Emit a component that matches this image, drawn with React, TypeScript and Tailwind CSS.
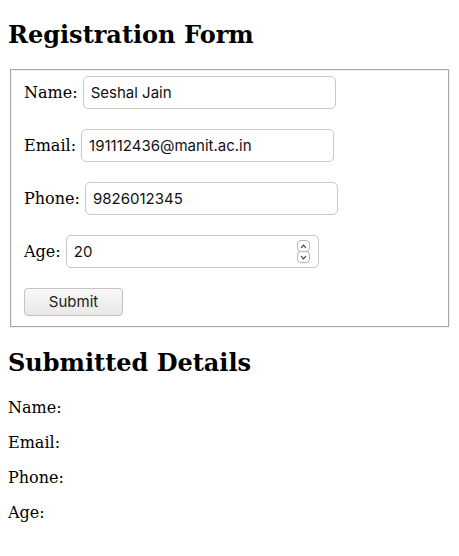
import React, { useState } from "react";

type Details = { name: string; email: string; phone: string; age: string };

const fields: { key: keyof Details; label: string; type: string }[] = [
  { key: "name", label: "Name:", type: "text" },
  { key: "email", label: "Email:", type: "email" },
  { key: "phone", label: "Phone:", type: "tel" },
  { key: "age", label: "Age:", type: "number" },
];

const inputCls =
  "w-[253px] h-[33px] rounded-[5px] border border-[#cbc7c2] bg-white px-[7px] font-['Inter',sans-serif] text-[15px] text-[#111] outline-none";

const Spinner = () => (
  <span className="pointer-events-none absolute right-[9px] top-[5px] flex flex-col">
    <span className="flex h-[12px] w-[13px] items-center justify-center rounded-[4px] border border-[#b9b5b0] bg-white">
      <svg width="7" height="5" viewBox="0 0 7 5">
        <path d="M1 4 L3.5 1.2 L6 4" fill="none" stroke="#333" strokeWidth="1.1" />
      </svg>
    </span>
    <span className="-mt-px flex h-[12px] w-[13px] items-center justify-center rounded-[4px] border border-[#b9b5b0] bg-white">
      <svg width="7" height="5" viewBox="0 0 7 5">
        <path d="M1 1 L3.5 3.8 L6 1" fill="none" stroke="#333" strokeWidth="1.1" />
      </svg>
    </span>
  </span>
);

export default function App() {
  const [form, setForm] = useState<Details>({
    name: "Seshal Jain",
    email: "191112436@manit.ac.in",
    phone: "9826012345",
    age: "20",
  });
  const [submitted, setSubmitted] = useState<Details>({ name: "", email: "", phone: "", age: "" });

  const handleSubmit = (e: React.FormEvent) => {
    e.preventDefault();
    setSubmitted(form);
  };

  return (
    <div className="min-h-screen bg-white px-2 pt-[20px] pb-4 font-['DejaVu_Serif',serif] text-[16px] text-black">
      <h2 className="text-[24px] font-bold leading-[29px]">Registration Form</h2>

      <form onSubmit={handleSubmit} className="mt-[20px]">
        <fieldset className="mx-[2px] border border-[#a6a6a6] px-[13px] pt-[6px] pb-[10px] shadow-[inset_1px_1px_0_#f2f2f2,1px_1px_0_#f2f2f2]">
          <div className="flex flex-col items-start gap-5">
            {fields.map((f) => (
              <div key={f.key} className="leading-[19px]">
                <label>{f.label}</label>{" "}
                {f.key === "age" ? (
                  <span className="relative inline-block">
                    <input
                      type="text"
                      inputMode="numeric"
                      className={inputCls}
                      value={form[f.key]}
                      onChange={(e) => setForm({ ...form, [f.key]: e.target.value })}
                    />
                    <Spinner />
                  </span>
                ) : (
                  <input
                    type={f.type}
                    className={inputCls}
                    value={form[f.key]}
                    onChange={(e) => setForm({ ...form, [f.key]: e.target.value })}
                  />
                )}
              </div>
            ))}
            <button
              type="submit"
              className="h-[28px] w-[99px] rounded-[4px] border border-[#c6c3be] bg-linear-to-b from-[#f8f8f7] to-[#e9e8e6] font-['Inter',sans-serif] text-[15px] text-[#222]"
            >
              Submit
            </button>
          </div>
        </fieldset>
      </form>

      <h2 className="mt-[21px] text-[24px] font-bold leading-[29px]">Submitted Details</h2>
      <div className="mt-[21px] flex flex-col gap-4 leading-[19px]">
        <p>Name: {submitted.name}</p>
        <p>Email: {submitted.email}</p>
        <p>Phone: {submitted.phone}</p>
        <p>Age: {submitted.age}</p>
      </div>
    </div>
  );
}
